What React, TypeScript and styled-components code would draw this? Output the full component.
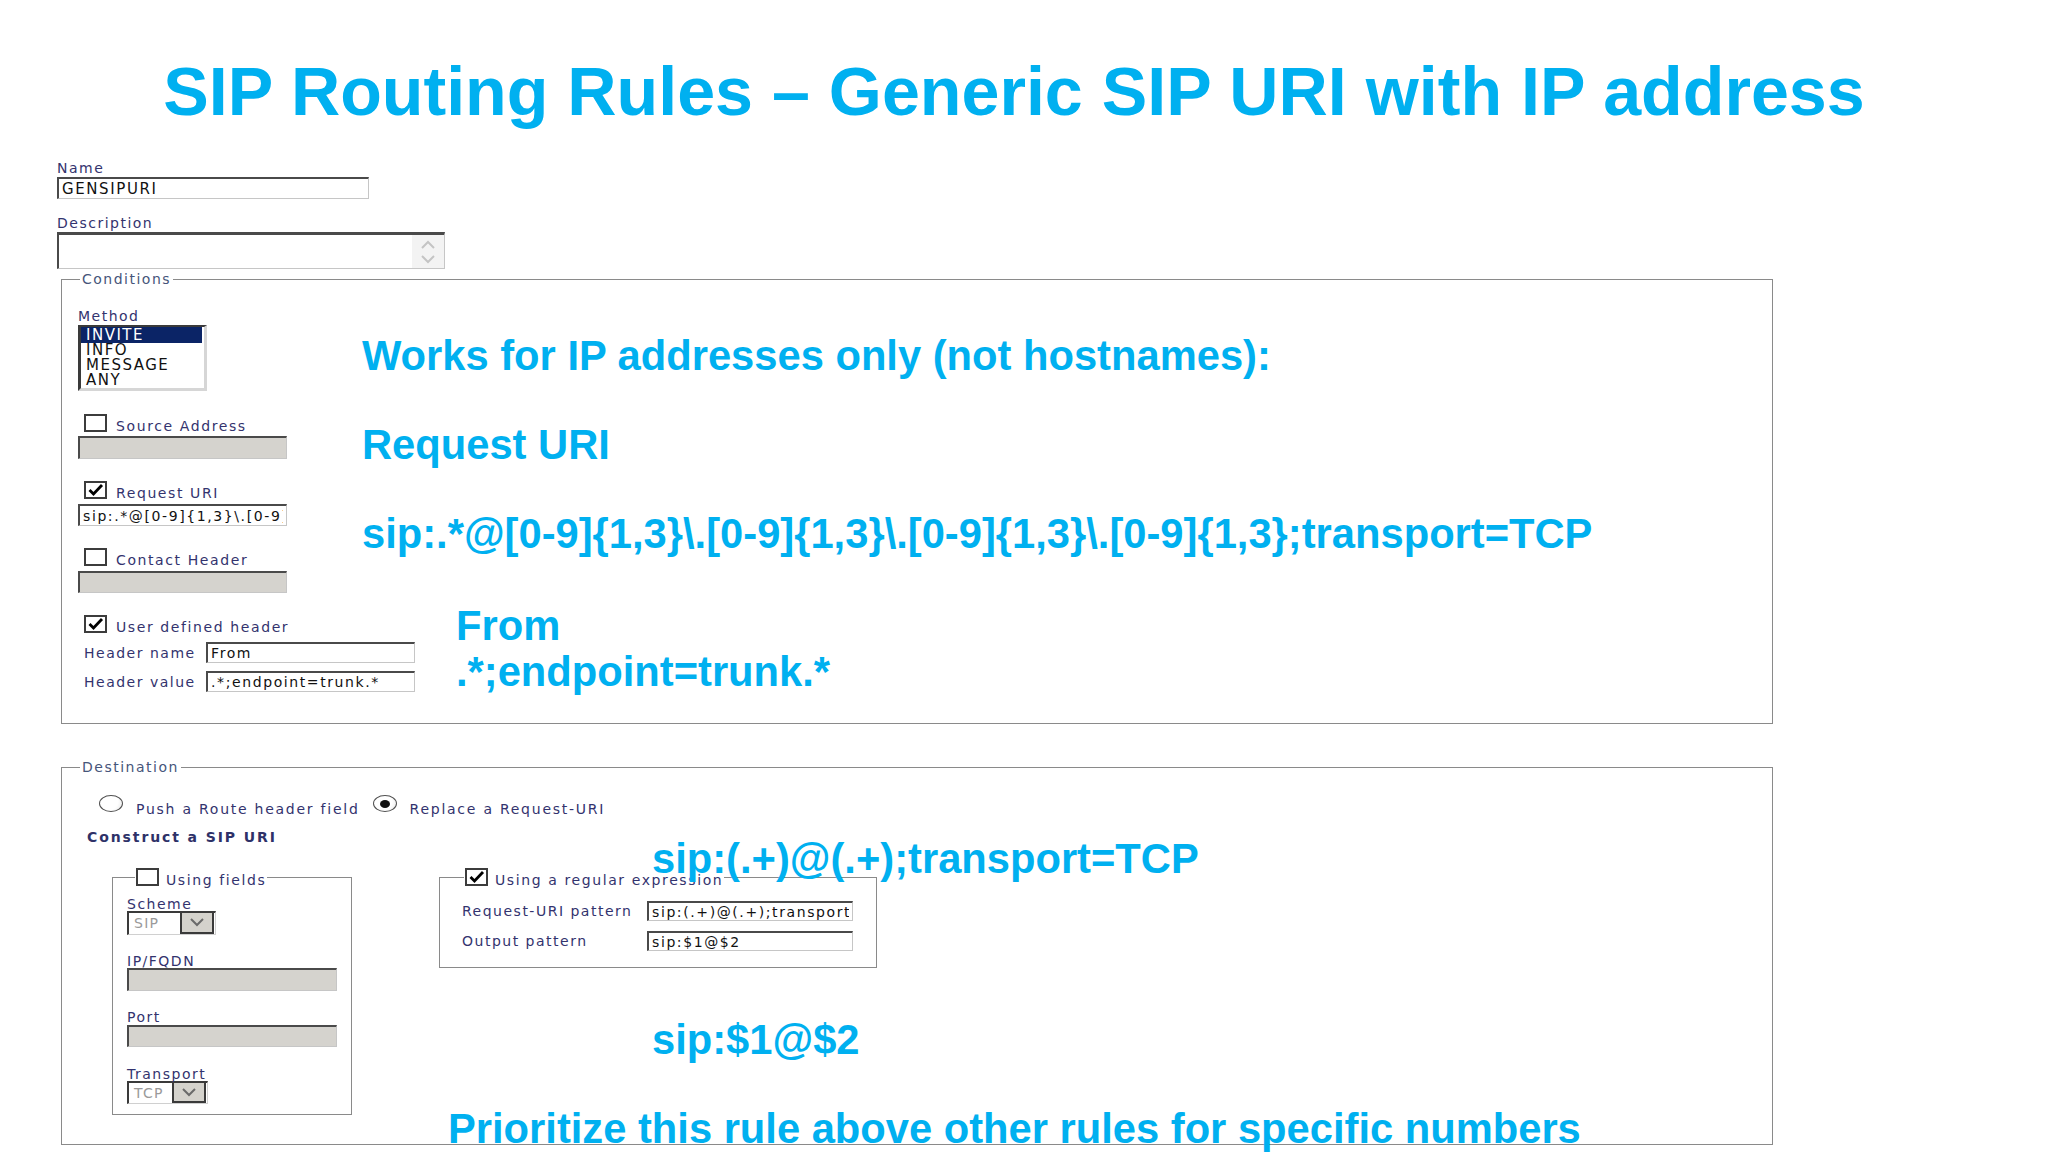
import React from 'react';
import styled, { createGlobalStyle } from 'styled-components';

const GlobalStyle = createGlobalStyle`
  html, body { margin: 0; padding: 0; background: #fff; }
  body { font-family: "DejaVu Sans", Verdana, sans-serif; }
  * { box-sizing: border-box; }
`;

const ACCENT = '#00b0f0';
const INK = '#33336e';
const FRAME = '#8a8a8a';

const Slide = styled.div`
  width: 2048px;
  height: 1153px;
  overflow: hidden;
  background: #fff;
`;

const Title = styled.h1`
  margin: 0;
  padding: 57px 20px 0 0;
  text-align: center;
  font: bold 68.2px/68px "Liberation Sans", Arial, sans-serif;
  color: ${ACCENT};
  white-space: nowrap;
`;

const Form = styled.div`
  padding: 35px 0 0 57px;
`;

const Label = styled.div<{ $mt?: number }>`
  margin-top: ${p => p.$mt ?? 0}px;
  font-size: 14px;
  line-height: 16px;
  letter-spacing: 1.5px;
  color: ${INK};
  white-space: nowrap;
`;

const Field = styled.input<{ $w: number; $h: number; $mt?: number }>`
  display: block;
  width: ${p => p.$w}px;
  height: ${p => p.$h}px;
  margin: ${p => p.$mt ?? 0}px 0 0 0;
  padding: 0 3px;
  border: 1px solid #c6c6c6;
  border-top: 2px solid #4a4a4a;
  border-left: 2px solid #4a4a4a;
  background: ${p => (p.disabled ? '#d5d3ce' : '#fff')};
  font-family: "DejaVu Sans", Verdana, sans-serif;
  font-size: 14px;
  letter-spacing: 1.6px;
  color: #111;
  outline: none;
`;

const TextArea = styled.div`
  display: flex;
  width: 388px;
  height: 37px;
  margin-top: 1px;
  border: 1px solid #c6c6c6;
  border-top: 3px solid #4a4a4a;
  border-left: 2px solid #4a4a4a;
  background: #fff;
`;

const TextAreaBody = styled.div`
  flex: 1;
`;

const ScrollTrack = styled.div`
  width: 32px;
  background: #f3f3f3;
  display: flex;
  flex-direction: column;
  align-items: center;
  justify-content: center;
  gap: 6px;
`;

const ListBox = styled.div`
  width: 129px;
  height: 66px;
  margin-top: 1px;
  border: 3px solid #d6d6d6;
  border-top: 2px solid #3a3a3a;
  border-left: 3px solid #3a3a3a;
  background: #fff;
  padding-right: 2px;
`;

const ListItem = styled.div<{ $selected?: boolean }>`
  height: ${p => (p.$selected ? 16 : 15)}px;
  padding-left: 5px;
  font-size: 15px;
  line-height: ${p => (p.$selected ? 16 : 15)}px;
  letter-spacing: 1.5px;
  color: ${p => (p.$selected ? '#fff' : '#111')};
  background: ${p => (p.$selected ? '#0b2466' : 'transparent')};
`;

const Group = styled.fieldset<{ $mt: number }>`
  width: 1712px;
  min-width: 0;
  margin: ${p => p.$mt}px 0 0 4px;
  padding: 0;
  border: 1px solid ${FRAME};
`;

const GroupLegend = styled.legend`
  margin-left: 18px;
  padding: 0 2px;
  font-size: 14px;
  line-height: 16px;
  letter-spacing: 1.5px;
  color: #46557a;
`;

const CondBody = styled.div`
  padding: 21px 0 28px 16px;
`;

const CondTop = styled.div`
  display: grid;
  grid-template-columns: 284px 1fr;
`;

const Column = styled.div`
  display: flex;
  flex-direction: column;
  align-items: flex-start;
`;

const NoteColumn = styled.div`
  display: flex;
  flex-direction: column;
  gap: 41px;
  padding-top: 24px;
`;

const Note = styled.div<{ $mt?: number; $ml?: number; $mb?: number; $lh?: number }>`
  position: relative;
  z-index: 1;
  margin: ${p => p.$mt ?? 0}px 0 ${p => p.$mb ?? 0}px ${p => p.$ml ?? 0}px;
  font: bold 41.7px/${p => p.$lh ?? 48}px "Liberation Sans", Arial, sans-serif;
  color: ${ACCENT};
  white-space: nowrap;
`;

const CheckRow = styled.div<{ $mt?: number; $ml?: number }>`
  display: flex;
  align-items: flex-end;
  gap: 9px;
  margin: ${p => p.$mt ?? 0}px 0 0 ${p => p.$ml ?? 6}px;
`;

const CheckText = styled.span`
  font-size: 14px;
  line-height: 16px;
  letter-spacing: 1.6px;
  color: ${INK};
  white-space: nowrap;
  margin-bottom: -2px;
`;

const Box = styled.span`
  display: inline-flex;
  align-items: center;
  justify-content: center;
  flex: none;
  width: 23px;
  height: 18px;
  border: 2px solid #3c3c3c;
  background: #fff;
`;

const CondBottom = styled.div`
  display: flex;
  align-items: flex-start;
  gap: 41px;
  margin-top: 22px;
`;

const HeaderBlock = styled.div`
  width: 337px;
  display: flex;
  flex-direction: column;
`;

const PairRow = styled.div<{ $mt: number }>`
  display: flex;
  align-items: center;
  margin: ${p => p.$mt}px 0 0 6px;
`;

const PairLabel = styled.span<{ $w: number }>`
  width: ${p => p.$w}px;
  font-size: 14px;
  letter-spacing: 1.5px;
  color: ${INK};
  white-space: nowrap;
`;

const NoteStack = styled.div`
  margin-top: -12px;
`;

const DestBody = styled.div`
  padding: 20px 0 0 25px;
`;

const RadioRow = styled.div`
  display: flex;
  align-items: flex-end;
  margin-left: 12px;
`;

const Radio = styled.span<{ $on?: boolean }>`
  display: inline-flex;
  align-items: center;
  justify-content: center;
  flex: none;
  width: 24px;
  height: 17px;
  border-radius: 50%;
  border: 1.5px solid #505050;
  background: radial-gradient(circle at 40% 35%, #fff 55%, #e4e4e4 100%);
  &::after {
    content: '';
    display: ${p => (p.$on ? 'block' : 'none')};
    width: 10px;
    height: 8px;
    border-radius: 50%;
    background: #111;
  }
`;

const RadioText = styled.span<{ $mr?: number }>`
  margin: 0 ${p => p.$mr ?? 0}px -5px 13px;
  font-size: 14px;
  line-height: 16px;
  letter-spacing: 1.75px;
  color: ${INK};
  white-space: nowrap;
`;

const Heading = styled.div`
  margin-top: 17px;
  font-size: 14px;
  font-weight: bold;
  line-height: 16px;
  letter-spacing: 1.9px;
  color: #2e3168;
`;

const DestRow = styled.div`
  display: flex;
  align-items: flex-start;
  margin-top: 23px;
`;

const SubGroup = styled.fieldset<{ $w: number; $ml: number; $pad: string }>`
  width: ${p => p.$w}px;
  min-width: 0;
  margin: 0 0 0 ${p => p.$ml}px;
  padding: ${p => p.$pad};
  border: 1px solid ${FRAME};
`;

const SubLegend = styled.legend<{ $ml: number }>`
  display: flex;
  align-items: flex-end;
  gap: 7px;
  margin-left: ${p => p.$ml}px;
  padding: 0 1px;
`;

const Select = styled.div<{ $w: number; $h: number; $mt?: number }>`
  display: flex;
  width: ${p => p.$w}px;
  height: ${p => p.$h}px;
  margin-top: ${p => p.$mt ?? 0}px;
  border: 1px solid #d0d0d0;
  border-top: 2px solid #3a3a3a;
  border-left: 2px solid #3a3a3a;
  background: #fff;
`;

const SelectValue = styled.span`
  flex: 1;
  padding-left: 5px;
  font-size: 14px;
  line-height: 20px;
  letter-spacing: 1.3px;
  color: #9a9a9a;
`;

const SelectButton = styled.span`
  width: 34px;
  display: flex;
  align-items: center;
  justify-content: center;
  background: #d4d2cc;
  border: 2px solid #3a3a3a;
  border-top-width: 0;
  margin: 0 1px 0 0;
`;

const RightColumn = styled.div`
  display: flex;
  flex-direction: column;
  align-items: flex-start;
  margin-left: 87px;
`;

const PatternRow = styled.div<{ $mt?: number }>`
  display: flex;
  align-items: center;
  margin-top: ${p => p.$mt ?? 0}px;
`;

const Check = ({ on }: { on?: boolean }) => (
  <Box>
    {on && (
      <svg width="18" height="14" viewBox="0 0 18 14">
        <path d="M2.5 7 L6.5 11 L15 2" fill="none" stroke="#000" strokeWidth="2.8" />
      </svg>
    )}
  </Box>
);

const Chevron = ({ up, color }: { up?: boolean; color: string }) => (
  <svg width="16" height="9" viewBox="0 0 16 9">
    <path
      d={up ? 'M2 8 L8 2 L14 8' : 'M2 1 L8 7 L14 1'}
      fill="none"
      stroke={color}
      strokeWidth="2"
    />
  </svg>
);

const Dropdown = ({ value, w, h, mt }: { value: string; w: number; h: number; mt?: number }) => (
  <Select $w={w} $h={h} $mt={mt}>
    <SelectValue>{value}</SelectValue>
    <SelectButton>
      <Chevron color="#6a6a6a" />
    </SelectButton>
  </Select>
);

export default function App() {
  return (
    <Slide>
      <GlobalStyle />
      <Title>SIP Routing Rules – Generic SIP URI with IP address</Title>
      <Form>
        <Label>Name</Label>
        <Field $w={312} $h={22} $mt={1} readOnly value="GENSIPURI" style={{ fontSize: 15 }} />
        <Label $mt={16}>Description</Label>
        <TextArea>
          <TextAreaBody />
          <ScrollTrack>
            <Chevron up color="#c4c4c4" />
            <Chevron color="#c4c4c4" />
          </ScrollTrack>
        </TextArea>

        <Group $mt={2}>
          <GroupLegend>Conditions</GroupLegend>
          <CondBody>
            <CondTop>
              <Column>
                <Label>Method</Label>
                <ListBox>
                  <ListItem $selected>INVITE</ListItem>
                  <ListItem>INFO</ListItem>
                  <ListItem>MESSAGE</ListItem>
                  <ListItem>ANY</ListItem>
                </ListBox>
                <CheckRow $mt={23}>
                  <Check />
                  <CheckText>Source Address</CheckText>
                </CheckRow>
                <Field $w={209} $h={23} $mt={4} disabled />
                <CheckRow $mt={22}>
                  <Check on />
                  <CheckText>Request URI</CheckText>
                </CheckRow>
                <Field $w={209} $h={22} $mt={5} readOnly value="sip:.*@[0-9]{1,3}\.[0-9]{1,3}\.[0-9]{1,3}\.[0-9]{1,3};transport=TCP" />
                <CheckRow $mt={22}>
                  <Check />
                  <CheckText>Contact Header</CheckText>
                </CheckRow>
                <Field $w={209} $h={22} $mt={5} disabled />
              </Column>
              <NoteColumn>
                <Note>Works for IP addresses only (not hostnames):</Note>
                <Note>Request URI</Note>
                <Note>sip:.*@[0-9]{'{'}1,3{'}'}\.[0-9]{'{'}1,3{'}'}\.[0-9]{'{'}1,3{'}'}\.[0-9]{'{'}1,3{'}'};transport=TCP</Note>
              </NoteColumn>
            </CondTop>
            <CondBottom>
              <HeaderBlock>
                <CheckRow>
                  <Check on />
                  <CheckText>User defined header</CheckText>
                </CheckRow>
                <PairRow $mt={9}>
                  <PairLabel $w={122}>Header name</PairLabel>
                  <Field $w={209} $h={21} readOnly value="From" />
                </PairRow>
                <PairRow $mt={8}>
                  <PairLabel $w={122}>Header value</PairLabel>
                  <Field $w={209} $h={21} readOnly value=".*;endpoint=trunk.*" />
                </PairRow>
              </HeaderBlock>
              <NoteStack>
                <Note $lh={46}>From</Note>
                <Note $lh={46}>.*;endpoint=trunk.*</Note>
              </NoteStack>
            </CondBottom>
          </CondBody>
        </Group>

        <Group $mt={35}>
          <GroupLegend>Destination</GroupLegend>
          <DestBody>
            <RadioRow>
              <Radio />
              <RadioText $mr={13}>Push a Route header field</RadioText>
              <Radio $on />
              <RadioText>Replace a Request-URI</RadioText>
            </RadioRow>
            <Heading>Construct a SIP URI</Heading>
            <DestRow>
              <SubGroup $w={240} $ml={25} $pad="10px 0 10px 14px">
                <SubLegend $ml={8}>
                  <Check />
                  <CheckText>Using fields</CheckText>
                </SubLegend>
                <Label>Scheme</Label>
                <Dropdown value="SIP" w={89} h={24} mt={-1} />
                <Label $mt={18}>IP/FQDN</Label>
                <Field $w={210} $h={23} $mt={-1} disabled />
                <Label $mt={18}>Port</Label>
                <Field $w={210} $h={22} disabled />
                <Label $mt={19}>Transport</Label>
                <Dropdown value="TCP" w={81} h={23} mt={-1} />
              </SubGroup>
              <RightColumn>
                <Note $mt={-33} $ml={213} $mb={-15}>sip:(.+)@(.+);transport=TCP</Note>
                <SubGroup $w={438} $ml={0} $pad="15px 0 16px 22px">
                  <SubLegend $ml={2}>
                    <Check on />
                    <CheckText>Using a regular expression</CheckText>
                  </SubLegend>
                  <PatternRow>
                    <PairLabel $w={185}>Request-URI pattern</PairLabel>
                    <Field $w={206} $h={20} readOnly value="sip:(.+)@(.+);transport=TCP" />
                  </PatternRow>
                  <PatternRow $mt={10}>
                    <PairLabel $w={185}>Output pattern</PairLabel>
                    <Field $w={206} $h={20} readOnly value="sip:$1@$2" />
                  </PatternRow>
                </SubGroup>
                <Note $mt={48} $ml={213}>sip:$1@$2</Note>
                <Note $mt={41} $ml={9} $mb={-9}>Prioritize this rule above other rules for specific numbers</Note>
              </RightColumn>
            </DestRow>
          </DestBody>
        </Group>
      </Form>
    </Slide>
  );
}
